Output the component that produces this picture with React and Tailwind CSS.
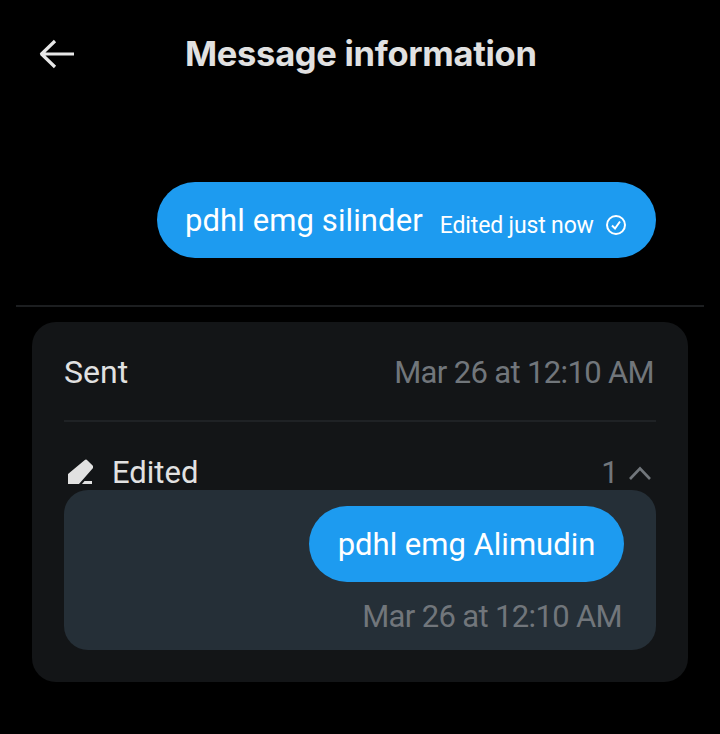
import React from 'react';

const font = { fontFamily: 'Roboto, sans-serif' };

const TimeText = ({ children, className = '' }) => (
  <span className={`text-[31px] leading-[40px] text-[#71767b] tracking-[-0.65px] ${className}`}>{children}</span>
);

export default function App() {
  return (
    <div className="w-[720px] h-[734px] bg-black overflow-hidden font-['Roboto',sans-serif]" style={font}>
      {/* Header */}
      <div className="h-[108px] flex items-center pl-[38px]">
        <svg width="38" height="32" viewBox="0 0 38 32" fill="none" stroke="#e7e7e7" strokeWidth="3.2" strokeLinecap="round" strokeLinejoin="round">
          <path d="M36 16H4M17 3 3.5 16 17 29" strokeLinecap="butt" />
        </svg>
        <h1 className="ml-[109px] text-[34.5px] leading-[40px] font-bold text-[#e1e1e1] font-['Inter',sans-serif] tracking-[-0.3px]">Message information</h1>
      </div>

      {/* Message bubble */}
      <div className="flex justify-end pt-[74px] pr-[64px]">
        <div className="h-[76px] w-[499px] rounded-[38px] bg-[#1d9bf0] flex items-center pl-[28px] text-white">
          <span className="mt-[2px] text-[31px] leading-[40px] tracking-[0.1px]">pdhl emg silinder</span>
          <span className="ml-[17px] mt-[11px] text-[23px] leading-[30px] tracking-[-0.15px]">Edited just now</span>
          <svg className="ml-[11px] mt-[9px]" width="22" height="22" viewBox="0 0 22 22" fill="none" stroke="white" strokeWidth="2">
            <circle cx="11" cy="11" r="9" />
            <path d="M7 11.5l3 3 5-7" />
          </svg>
        </div>
      </div>

      <div className="mx-4 mt-[47px] h-[2px] bg-[#1c1e20]" />

      {/* Info card */}
      <div className="mx-8 mt-[15px] h-[360px] rounded-[24px] bg-[#131517] px-8">
        <div className="flex items-center justify-between h-[100px] border-b-2 border-[#1f2225]">
          <span className="mt-[2px] text-[32px] leading-[40px] text-[#e1e1e1]">Sent</span>
          <TimeText className="mt-[4px] pr-[2px]">Mar 26 at 12:10 AM</TimeText>
        </div>
        <div className="h-[68px] overflow-hidden flex items-start justify-between pt-[30px]">
          <div className="flex items-start">
            <svg className="ml-[4px] mt-[7px]" width="25" height="25" viewBox="0 0 25 25" fill="#e1e1e1">
              <path d="M0 15 16.5 1.2a2.2 2.2 0 0 1 3 .2L24.6 6.6a2.2 2.2 0 0 1 0 3L11 25H0z" />
              <path d="M16.5 22H24v3H14z" />
            </svg>
            <span className="ml-[19px] mt-[1px] text-[31px] leading-[40px] text-[#e1e1e1]">Edited</span>
          </div>
          <div className="flex items-center">
            <TimeText className="mt-[1px]">1</TimeText>
            <svg className="ml-[10px] mr-[4px]" width="24" height="16" viewBox="0 0 24 16" fill="none" stroke="#71767b" strokeWidth="2.6">
              <path d="M2 14 12 3.5 22 14" />
            </svg>
          </div>
        </div>

        {/* Edit history */}
        <div className="h-[160px] rounded-[24px] bg-[#252f37] pt-4 px-8 flex flex-col items-end">
          <div className="h-[76px] w-[315px] rounded-[38px] bg-[#1d9bf0] flex items-center justify-center text-white">
            <span className="mt-[2px] text-[31px] leading-[40px]">pdhl emg Alimudin</span>
          </div>
          <TimeText className="mt-[15px] pr-[2px]">Mar 26 at 12:10 AM</TimeText>
        </div>
      </div>
    </div>
  );
}
